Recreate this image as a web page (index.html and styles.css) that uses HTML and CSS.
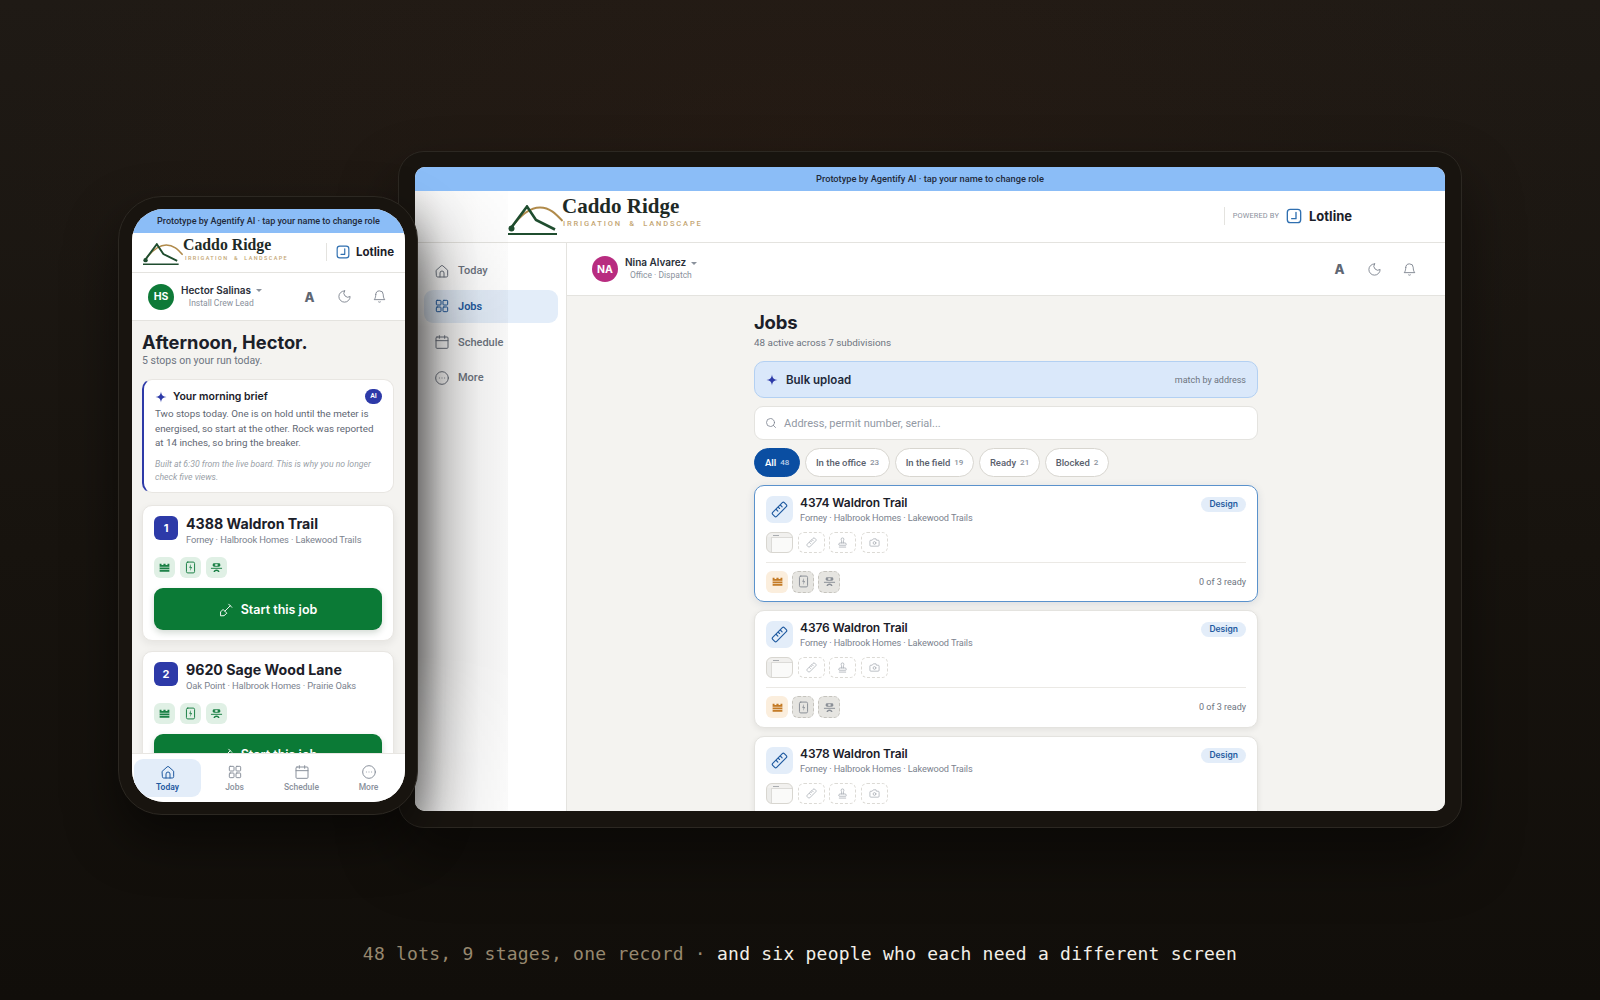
FILE: index.html
```html
<!DOCTYPE html>
<html lang="en">

<head>
   <meta charset="UTF-8">
   <meta name="viewport" content="width=device-width, initial-scale=1.0">
   <title>Caddo Ridge on Lotline</title>
   <link rel="stylesheet" href="styles.css">
</head>

<body>
   <svg class="icon-defs" width="0" height="0" aria-hidden="true">
      <symbol id="i-home" viewBox="0 0 24 24"><path d="M3.5 10.8 10.6 4.4a2 2 0 0 1 2.8 0l7.1 6.4V19a2 2 0 0 1-2 2H5.5a2 2 0 0 1-2-2z" /><path d="M9 21v-6a3 3 0 0 1 6 0v6" /></symbol>
      <symbol id="i-grid" viewBox="0 0 24 24"><rect x="3.5" y="3.5" width="7" height="7" rx="1.2" /><rect x="13.5" y="3.5" width="7" height="7" rx="1.2" /><rect x="3.5" y="13.5" width="7" height="7" rx="1.2" /><rect x="13.5" y="13.5" width="7" height="7" rx="1.2" /></symbol>
      <symbol id="i-cal" viewBox="0 0 24 24"><rect x="3" y="4.5" width="18" height="17" rx="1.5" /><path d="M3 10h18M8 2.5v4M16 2.5v4" /></symbol>
      <symbol id="i-more" viewBox="0 0 24 24"><circle cx="12" cy="12" r="9.5" /><path d="M8 12h.01M12 12h.01M16 12h.01" /></symbol>
      <symbol id="i-moon" viewBox="0 0 24 24"><path d="M12 3a6.5 6.5 0 0 0 9 9 9 9 0 1 1-9-9Z" /></symbol>
      <symbol id="i-bell" viewBox="0 0 24 24"><path d="M6 9a6 6 0 0 1 12 0c0 6 2.500 8 2.500 8h-17S6 15 6 9" /><path d="M10.300 20.500a2 2 0 0 0 3.400 0" /></symbol>
      <symbol id="i-ruler" viewBox="0 0 24 24"><path d="M16 2.400a2 2 0 0 1 2.800 0l2.800 2.800a2 2 0 0 1 0 2.800L8 21.600a2 2 0 0 1-2.800 0l-2.800-2.800a2 2 0 0 1 0-2.800Z" /><path d="m13.500 6 2.200 2.200M10.500 9l1.600 1.600M7.500 12l2.200 2.200" /></symbol>
      <symbol id="i-stamp" viewBox="0 0 24 24"><path d="M5 22h14" /><path d="M4 15.500A2.500 2.500 0 0 1 6.500 13h11a2.500 2.500 0 0 1 2.500 2.500V17a1 1 0 0 1-1 1H5a1 1 0 0 1-1-1Z" /><path d="M14 13V8.500C14 7 15 7 15 5a3 3 0 0 0-6 0c0 2 1 2 1 3.500V13" /></symbol>
      <symbol id="i-camera" viewBox="0 0 24 24"><path d="M14.500 4h-5L7 7H4a2 2 0 0 0-2 2v9a2 2 0 0 0 2 2h16a2 2 0 0 0 2-2V9a2 2 0 0 0-2-2h-3z" /><circle cx="12" cy="13" r="3" /></symbol>
      <symbol id="i-shovel" viewBox="0 0 24 24"><path d="M2.500 21.500v-5.600l4-4 6 6-4 3.600z" /><path d="M9.500 14.500 18 6" /><path d="m15.500 3.500 5 5" /></symbol>
      <symbol id="i-fence" viewBox="0 0 24 24"><path class="solid" d="M3 5h3.500v2.500h3.500V5h4v2.500h3.500V5H21v15H3z" /><path class="cut" d="M3 11.500h18M3 15.800h18" /></symbol>
      <symbol id="i-meter" viewBox="0 0 24 24"><rect x="4.500" y="2" width="15" height="20" rx="2.500" /><path class="bolt" d="m13 5.500-3.500 7h2.800l-1.200 6 3.800-7.300H12.300z" /></symbol>
      <symbol id="i-crew" viewBox="0 0 24 24"><rect class="solid" x="5" y="4" width="14" height="6.500" rx="2.500" /><rect class="cut" x="10.500" y="6.300" width="3" height="2" /><path d="M2.500 13.500h19" /><path class="solid" d="M6.500 20.500c0-3 2.500-4.800 5.500-4.800s5.500 1.800 5.500 4.800h-2.500c-.5-1.300-1.500-2-3-2s-2.500.7-3 2z" /></symbol>
      <symbol id="i-search" viewBox="0 0 24 24"><circle cx="11" cy="11" r="8" /><path d="m21 21-4.300-4.300" /></symbol>
      <symbol id="i-spark" viewBox="0 0 24 24"><path class="spark" d="M12 1c.9 7 3.800 10.100 11 11-7.200.9-10.100 4-11 11-.9-7-3.800-10.100-11-11 7.200-.9 10.100-4 11-11Z" /></symbol>
      <symbol id="i-lotline" viewBox="0 0 24 24"><rect x="2" y="2" width="20" height="20" rx="4.500" /><path d="M15 6.500v9.500H8.500" /></symbol>
      <symbol id="i-mountain" viewBox="0 0 55 30"><path class="ridge" d="M3 23C11 12 21 2.500 32 2.500c10 0 16 6.500 22.500 13.500" /><path class="peak" d="M3 23 19 1.500 28 15l19 9.500" /><circle class="peak-dot" cx="3.500" cy="23.500" r="3" /><path class="peak-base" d="M0 29h49" /></symbol>
   </svg>

   <main class="stage">
      <section class="tablet">
         <div class="tablet-screen">
            <div class="proto-bar">Prototype by Agentify AI · tap your name to change role</div>
            <header class="brand-bar">
               <div class="brand">
                  <svg class="brand-mark"><use href="#i-mountain" /></svg>
                  <div class="brand-words">
                     <div class="brand-name">Caddo Ridge</div>
                     <div class="brand-tag">IRRIGATION &nbsp;&amp;&nbsp; LANDSCAPE</div>
                  </div>
               </div>
               <div class="powered">
                  <span class="powered-by">POWERED BY</span>
                  <svg class="ico lotline-mark"><use href="#i-lotline" /></svg>
                  <span class="lotline-name">Lotline</span>
               </div>
            </header>
            <div class="tablet-body">
               <nav class="side-nav">
                  <a class="side-item"><svg class="ico"><use href="#i-home" /></svg>Today</a>
                  <a class="side-item active"><svg class="ico"><use href="#i-grid" /></svg>Jobs</a>
                  <a class="side-item"><svg class="ico"><use href="#i-cal" /></svg>Schedule</a>
                  <a class="side-item"><svg class="ico"><use href="#i-more" /></svg>More</a>
               </nav>
               <div class="tablet-main">
                  <div class="profile-bar">
                     <div class="avatar avatar-pink">NA</div>
                     <div class="who">
                        <div class="who-name">Nina Alvarez <span class="caret"></span></div>
                        <div class="who-role">Office · Dispatch</div>
                     </div>
                     <div class="bar-tools">
                        <span class="tool-a">A</span>
                        <svg class="ico"><use href="#i-moon" /></svg>
                        <svg class="ico"><use href="#i-bell" /></svg>
                     </div>
                  </div>
                  <div class="jobs-wrap">
                     <div class="jobs">
                        <h1 class="jobs-title">Jobs</h1>
                        <p class="jobs-sub">48 active across 7 subdivisions</p>

                        <div class="bulk">
                           <svg class="ico spark-ico"><use href="#i-spark" /></svg>
                           <span class="bulk-label">Bulk upload</span>
                           <span class="bulk-hint">match by address</span>
                        </div>

                        <div class="search">
                           <svg class="ico"><use href="#i-search" /></svg>
                           Address, permit number, serial...
                        </div>

                        <div class="chips">
                           <span class="chip on">All <b>48</b></span>
                           <span class="chip">In the office <b>23</b></span>
                           <span class="chip">In the field <b>19</b></span>
                           <span class="chip">Ready <b>21</b></span>
                           <span class="chip">Blocked <b>2</b></span>
                        </div>

                        <article class="job selected">
                           <div class="job-top">
                              <div class="job-ico"><svg class="ico"><use href="#i-ruler" /></svg></div>
                              <div class="job-words">
                                 <div class="job-title">4374 Waldron Trail</div>
                                 <div class="job-sub">Forney · Halbrook Homes · Lakewood Trails</div>
                              </div>
                              <span class="badge">Design</span>
                           </div>
                           <div class="docs">
                              <div class="doc-thumb"></div>
                              <div class="doc"><svg class="ico"><use href="#i-ruler" /></svg></div>
                              <div class="doc"><svg class="ico"><use href="#i-stamp" /></svg></div>
                              <div class="doc"><svg class="ico"><use href="#i-camera" /></svg></div>
                           </div>
                           <div class="job-foot">
                              <div class="trade orange"><svg class="ico"><use href="#i-fence" /></svg></div>
                              <div class="trade grey"><svg class="ico"><use href="#i-meter" /></svg></div>
                              <div class="trade grey"><svg class="ico"><use href="#i-crew" /></svg></div>
                              <span class="ready">0 of 3 ready</span>
                           </div>
                        </article>

                        <article class="job">
                           <div class="job-top">
                              <div class="job-ico"><svg class="ico"><use href="#i-ruler" /></svg></div>
                              <div class="job-words">
                                 <div class="job-title">4376 Waldron Trail</div>
                                 <div class="job-sub">Forney · Halbrook Homes · Lakewood Trails</div>
                              </div>
                              <span class="badge">Design</span>
                           </div>
                           <div class="docs">
                              <div class="doc-thumb"></div>
                              <div class="doc"><svg class="ico"><use href="#i-ruler" /></svg></div>
                              <div class="doc"><svg class="ico"><use href="#i-stamp" /></svg></div>
                              <div class="doc"><svg class="ico"><use href="#i-camera" /></svg></div>
                           </div>
                           <div class="job-foot">
                              <div class="trade orange"><svg class="ico"><use href="#i-fence" /></svg></div>
                              <div class="trade grey"><svg class="ico"><use href="#i-meter" /></svg></div>
                              <div class="trade grey"><svg class="ico"><use href="#i-crew" /></svg></div>
                              <span class="ready">0 of 3 ready</span>
                           </div>
                        </article>

                        <article class="job">
                           <div class="job-top">
                              <div class="job-ico"><svg class="ico"><use href="#i-ruler" /></svg></div>
                              <div class="job-words">
                                 <div class="job-title">4378 Waldron Trail</div>
                                 <div class="job-sub">Forney · Halbrook Homes · Lakewood Trails</div>
                              </div>
                              <span class="badge">Design</span>
                           </div>
                           <div class="docs">
                              <div class="doc-thumb"></div>
                              <div class="doc"><svg class="ico"><use href="#i-ruler" /></svg></div>
                              <div class="doc"><svg class="ico"><use href="#i-stamp" /></svg></div>
                              <div class="doc"><svg class="ico"><use href="#i-camera" /></svg></div>
                           </div>
                        </article>
                     </div>
                  </div>
               </div>
            </div>
            <div class="phone-shadow"></div>
         </div>
      </section>

      <section class="phone">
         <div class="phone-screen">
            <div class="proto-bar">Prototype by Agentify AI · tap your name to change role</div>
            <header class="brand-bar">
               <div class="brand">
                  <svg class="brand-mark"><use href="#i-mountain" /></svg>
                  <div class="brand-words">
                     <div class="brand-name">Caddo Ridge</div>
                     <div class="brand-tag">IRRIGATION &nbsp;&amp;&nbsp; LANDSCAPE</div>
                  </div>
               </div>
               <div class="powered">
                  <svg class="ico lotline-mark"><use href="#i-lotline" /></svg>
                  <span class="lotline-name">Lotline</span>
               </div>
            </header>
            <div class="profile-bar">
               <div class="avatar avatar-green">HS</div>
               <div class="who">
                  <div class="who-name">Hector Salinas <span class="caret"></span></div>
                  <div class="who-role">Install Crew Lead</div>
               </div>
               <div class="bar-tools">
                  <span class="tool-a">A</span>
                  <svg class="ico"><use href="#i-moon" /></svg>
                  <svg class="ico"><use href="#i-bell" /></svg>
               </div>
            </div>

            <div class="today">
               <h1 class="hello">Afternoon, Hector.</h1>
               <p class="hello-sub">5 stops on your run today.</p>

               <div class="brief">
                  <div class="brief-head">
                     <svg class="ico spark-ico"><use href="#i-spark" /></svg>
                     <span class="brief-title">Your morning brief</span>
                     <span class="ai-pill">AI</span>
                  </div>
                  <p class="brief-text">Two stops today. One is on hold until the meter is energised, so start at the other. Rock was reported at 14 inches, so bring the breaker.</p>
                  <p class="brief-note">Built at 6:30 from the live board. This is why you no longer check five views.</p>
               </div>

               <article class="stop">
                  <div class="stop-top">
                     <div class="stop-num">1</div>
                     <div>
                        <div class="stop-title">4388 Waldron Trail</div>
                        <div class="stop-sub">Forney · Halbrook Homes · Lakewood Trails</div>
                     </div>
                  </div>
                  <div class="stop-trades">
                     <div class="trade green"><svg class="ico"><use href="#i-fence" /></svg></div>
                     <div class="trade green"><svg class="ico"><use href="#i-meter" /></svg></div>
                     <div class="trade green"><svg class="ico"><use href="#i-crew" /></svg></div>
                  </div>
                  <button class="start"><svg class="ico"><use href="#i-shovel" /></svg>Start this job</button>
               </article>

               <article class="stop">
                  <div class="stop-top">
                     <div class="stop-num">2</div>
                     <div>
                        <div class="stop-title">9620 Sage Wood Lane</div>
                        <div class="stop-sub">Oak Point · Halbrook Homes · Prairie Oaks</div>
                     </div>
                  </div>
                  <div class="stop-trades">
                     <div class="trade green"><svg class="ico"><use href="#i-fence" /></svg></div>
                     <div class="trade green"><svg class="ico"><use href="#i-meter" /></svg></div>
                     <div class="trade green"><svg class="ico"><use href="#i-crew" /></svg></div>
                  </div>
                  <button class="start"><svg class="ico"><use href="#i-shovel" /></svg>Start this job</button>
               </article>
            </div>

            <nav class="tab-bar">
               <a class="tab active"><svg class="ico"><use href="#i-home" /></svg>Today</a>
               <a class="tab"><svg class="ico"><use href="#i-grid" /></svg>Jobs</a>
               <a class="tab"><svg class="ico"><use href="#i-cal" /></svg>Schedule</a>
               <a class="tab"><svg class="ico"><use href="#i-more" /></svg>More</a>
            </nav>
         </div>
      </section>

      <p class="caption"><span class="caption-dim">48 lots, 9 stages, one record · </span>and six people who each need a different screen</p>
   </main>
</body>

</html>
```

FILE: styles.css
```css
* {
   box-sizing: border-box;
}

html,
body {
   margin: 0;
   height: 100%;
}

body {
   background: #15110d;
   font-family: "Roboto", "Noto Sans", sans-serif;
   color: #1b2029;
   overflow: hidden;
}

.icon-defs {
   position: absolute;
}

.ico {
   display: block;
   width: 16px;
   height: 16px;
   fill: none;
   stroke: currentColor;
   stroke-width: 1.6;
   stroke-linecap: round;
   stroke-linejoin: round;
   flex: none;
}

.solid {
   fill: currentColor;
   stroke: none;
}

.cut {
   stroke: var(--tile, #fff);
   stroke-width: 1.3;
   fill: var(--tile, #fff);
}

.bolt {
   fill: currentColor;
   stroke: none;
}

.spark {
   fill: #2d3aa8;
   stroke: none;
}

.peak {
   fill: none;
   stroke: #1f4d2f;
   stroke-width: 2.6;
}

.peak-base {
   fill: none;
   stroke: #1f4d2f;
   stroke-width: 2;
}

.peak-dot {
   fill: #1f4d2f;
   stroke: none;
}

.ridge {
   fill: none;
   stroke: #b08a4a;
   stroke-width: 2;
}

.stage {
   position: relative;
   width: 1600px;
   height: 1000px;
   background:
      radial-gradient(ellipse 800px 420px at 50% 14%, rgba(60, 32, 18, 0.22), transparent),
      linear-gradient(#1f1a15, #17130e 55%, #110e0a);
}

/* devices sit on a free canvas */
.tablet {
   position: absolute;
   left: 398px;
   top: 151px;
   width: 1064px;
   height: 677px;
   padding: 15px 16px 16px;
   background: #18140f;
   border: 1px solid #2c2822;
   border-radius: 26px;
   box-shadow: 0 30px 60px rgba(0, 0, 0, 0.45);
}

.tablet-screen {
   position: relative;
   width: 100%;
   height: 100%;
   display: flex;
   flex-direction: column;
   overflow: hidden;
   border-radius: 10px;
   background: #fff;
}

.phone {
   position: absolute;
   left: 118px;
   top: 196px;
   width: 300px;
   height: 619px;
   padding: 12px 12px 12px 13px;
   background: #18140f;
   border: 1px solid #2c2822;
   border-radius: 44px;
   box-shadow: 0 24px 50px rgba(0, 0, 0, 0.5);
}

.phone-screen {
   position: relative;
   width: 100%;
   height: 100%;
   display: flex;
   flex-direction: column;
   overflow: hidden;
   border-radius: 32px;
   background: #f4f3f0;
}

/* the phone's shadow falling on the tablet */
.phone-shadow {
   position: absolute;
   left: 0;
   top: 24px;
   width: 93px;
   bottom: 0;
   pointer-events: none;
   background: linear-gradient(to right, rgba(20, 16, 12, 0.42), rgba(20, 16, 12, 0.2) 30%, rgba(20, 16, 12, 0.07) 70%, rgba(20, 16, 12, 0.035));
   -webkit-mask-image: linear-gradient(to bottom, rgba(0, 0, 0, 0.2), #000 22%, #000 75%, rgba(0, 0, 0, 0.6));
   mask-image: linear-gradient(to bottom, rgba(0, 0, 0, 0.2), #000 22%, #000 75%, rgba(0, 0, 0, 0.6));
}

.proto-bar {
   flex: none;
   height: 24px;
   background: #8bbdf7;
   color: #1f2a3a;
   font-size: 9.250px;
   font-weight: 500;
   text-align: center;
   line-height: 24px;
   white-space: nowrap;
}

.phone .proto-bar {
   font-size: 9.050px;
}

.brand-bar {
   flex: none;
   display: flex;
   align-items: center;
   background: #fff;
   border-bottom: 1px solid #e4e3df;
}

.brand {
   display: flex;
   align-items: flex-start;
}

.brand-name {
   font-family: "Liberation Serif", serif;
   font-weight: 700;
   color: #1e2a26;
   white-space: nowrap;
}

.brand-tag {
   color: #c4a673;
   white-space: nowrap;
   font-weight: 500;
}

.brand-mark {
   display: block;
   flex: none;
}

.powered {
   margin-left: auto;
   display: flex;
   align-items: center;
   border-left: 1px solid #e4e3df;
}

.powered-by {
   font-size: 7.400px;
   color: #8a919c;
   letter-spacing: 0.02em;
}

.lotline-mark {
   color: #2f6fb0;
   stroke-width: 2;
}

.lotline-name {
   font-family: "Inter", sans-serif;
   font-weight: 700;
   color: #1b2029;
}

.tablet .brand-bar {
   height: 52px;
   padding: 0 93px 0 93px;
}

.tablet .brand {
   height: 43px;
}

.tablet .brand-mark {
   width: 55px;
   height: 30px;
   margin-top: 10px;
   margin-right: -1px;
}

.tablet .brand-name {
   font-size: 21px;
   line-height: 24px;
   margin-top: -1px;
}

.tablet .brand-tag {
   font-size: 7.500px;
   line-height: 10px;
   letter-spacing: 0.245em;
   margin: 1px 0 0 1px;
}

.tablet .powered {
   height: 18px;
   padding-left: 8px;
   gap: 7px;
   margin-top: -2px;
}

.tablet .lotline-mark {
   width: 16px;
   height: 16px;
}

.tablet .lotline-name {
   font-size: 13px;
}

.phone .brand-bar {
   height: 40px;
   padding: 0 11px 0 11px;
}

.phone .brand {
   height: 33px;
}

.phone .brand-mark {
   width: 40px;
   height: 22px;
   margin-top: 7px;
}

.phone .brand-name {
   font-size: 15.800px;
   line-height: 18px;
}

.phone .brand-tag {
   font-size: 5.500px;
   line-height: 8px;
   letter-spacing: 0.25em;
   margin-left: 2px;
}

.phone .powered {
   height: 18px;
   padding-left: 9px;
   gap: 6px;
   margin-top: -2px;
}

.phone .lotline-mark {
   width: 14px;
   height: 14px;
}

.phone .lotline-name {
   font-size: 11.500px;
}

.tablet-body {
   flex: 1;
   min-height: 0;
   display: flex;
}

.side-nav {
   flex: none;
   width: 152px;
   padding: 11px 8px 0 9px;
   background: #fff;
   border-right: 1px solid #e4e3df;
   display: flex;
   flex-direction: column;
   gap: 2.200px;
}

.side-item {
   display: flex;
   align-items: center;
   gap: 8px;
   height: 33.500px;
   padding: 0 10px;
   border-radius: 9px;
   font-size: 11px;
   font-weight: 500;
   color: #6d7480;
}

.side-item .ico {
   width: 16px;
   height: 16px;
   stroke-width: 1.500;
}

.side-item.active {
   background: #e3edf9;
   color: #1f5aa0;
   font-weight: 600;
}

.tablet-main {
   flex: 1;
   min-width: 0;
   display: flex;
   flex-direction: column;
   background: #f4f3f0;
}

.profile-bar {
   flex: none;
   display: flex;
   align-items: center;
   background: #fff;
   border-bottom: 1px solid #e4e3df;
}

.tablet-main .profile-bar {
   height: 53px;
   padding: 0 28px 0 25px;
}

.phone .profile-bar {
   height: 48px;
   padding: 0 18px 0 16px;
}

.avatar {
   flex: none;
   width: 26px;
   height: 26px;
   border-radius: 50%;
   color: #fff;
   font-family: "Inter", sans-serif;
   font-size: 10.500px;
   font-weight: 700;
   display: flex;
   align-items: center;
   justify-content: center;
}

.avatar-pink {
   background: #b82c80;
}

.avatar-green {
   background: #0e7a38;
}

.who {
   margin: -1px 0 0 7px;
   text-align: center;
}

.who-name {
   font-family: "Inter", sans-serif;
   font-size: 10px;
   font-weight: 600;
   line-height: 13px;
   color: #2a2f39;
   white-space: nowrap;
}

.who-role {
   margin-top: 1px;
   font-size: 8.500px;
   line-height: 11px;
   color: #8a919c;
   white-space: nowrap;
}

.caret {
   display: inline-block;
   vertical-align: middle;
   margin-left: 2px;
   border-left: 3px solid transparent;
   border-right: 3px solid transparent;
   border-top: 3px solid #8a919c;
}

.bar-tools {
   margin-left: auto;
   display: flex;
   align-items: center;
   gap: 20px;
   color: #6d7480;
}

.bar-tools .ico {
   width: 15px;
   height: 15px;
   stroke-width: 1.300;
}

.tool-a {
   width: 15px;
   text-align: center;
   font-family: "Inter", sans-serif;
   font-size: 13px;
   font-weight: 800;
   color: #5f6773;
}

.jobs-wrap {
   flex: 1;
   min-height: 0;
   overflow: hidden;
   padding: 14px 0 0 187px;
}

.jobs {
   width: 504px;
}

.jobs-title {
   margin: 0;
   font-family: "Inter", sans-serif;
   font-size: 18.500px;
   line-height: 24px;
   font-weight: 700;
   letter-spacing: -0.2px;
   color: #1b2029;
}

.jobs-sub {
   margin: 2px 0 0;
   font-size: 9.900px;
   line-height: 14px;
   color: #6d7480;
}

.bulk {
   margin-top: 11px;
   height: 37px;
   padding: 0 11px;
   display: flex;
   align-items: center;
   background: #dae8fa;
   border: 1px solid #b3d0f2;
   border-radius: 10px;
}

.spark-ico {
   width: 12px;
   height: 12px;
}

.bulk-label {
   margin-left: 8px;
   font-family: "Inter", sans-serif;
   font-size: 11.500px;
   font-weight: 600;
   color: #1f2a3a;
}

.bulk-hint {
   margin-left: auto;
   font-size: 9px;
   color: #6d7480;
}

.search {
   margin-top: 8px;
   height: 34px;
   padding: 0 10px;
   display: flex;
   align-items: center;
   gap: 7px;
   background: #fff;
   border: 1px solid #e4e3df;
   border-radius: 9px;
   font-size: 11px;
   color: #9299a4;
}

.search .ico {
   width: 12px;
   height: 12px;
   stroke-width: 1.600;
   color: #7b828e;
}

.chips {
   margin-top: 8px;
   display: flex;
   gap: 4.500px;
}

.chip {
   height: 29px;
   padding: 0 10px;
   display: flex;
   align-items: center;
   gap: 4px;
   background: #fff;
   border: 1px solid #d8d6d0;
   border-radius: 15px;
   font-size: 9.500px;
   font-weight: 500;
   color: #5a616d;
   white-space: nowrap;
}

.chip b {
   font-size: 8px;
   font-weight: 500;
   color: #8a919c;
}

.chip.on {
   background: #0a4ea2;
   border-color: #0a4ea2;
   color: #fff;
   font-weight: 600;
}

.chip.on b {
   color: #b9cfe9;
}

.job {
   margin-top: 8px;
   padding: 10px 11px 0;
   height: 117.500px;
   background: #fff;
   border: 1px solid #e4e3df;
   border-radius: 10px;
   box-shadow: 0 2px 6px rgba(30, 30, 30, 0.08);
}

.chips + .job {
   margin-top: 7.500px;
}

.job.selected {
   border-color: #5a92cc;
   box-shadow: 0 2px 8px rgba(30, 60, 100, 0.12);
}

.job-top {
   display: flex;
   align-items: flex-start;
}

.job-ico {
   flex: none;
   width: 27px;
   height: 27px;
   border-radius: 7px;
   background: #e3edf9;
   color: #1f5aa0;
   display: flex;
   align-items: center;
   justify-content: center;
}

.job-ico .ico {
   width: 17px;
   height: 17px;
}

.job-words {
   margin-left: 7px;
}

.job-title {
   font-family: "Inter", sans-serif;
   font-size: 12px;
   line-height: 14px;
   font-weight: 600;
   letter-spacing: -0.1px;
   color: #1b2029;
}

.job-sub {
   margin-top: 1px;
   font-size: 9.200px;
   letter-spacing: -0.1px;
   line-height: 13px;
   color: #7b828e;
}

.badge {
   margin-left: auto;
   margin-top: 1px;
   height: 15px;
   padding: 0 8px;
   border-radius: 8px;
   background: #e3edf9;
   color: #1f5aa0;
   font-family: "Inter", sans-serif;
   font-size: 8.500px;
   line-height: 15px;
   font-weight: 600;
}

.docs {
   margin-top: 8px;
   display: flex;
   gap: 4.500px;
   padding-bottom: 9px;
   border-bottom: 1px solid #ebe9e5;
}

.doc,
.doc-thumb {
   width: 27px;
   height: 21px;
   border-radius: 6px;
}

.doc {
   border: 1px dashed #dcdad5;
   color: #a3a8b0;
   display: flex;
   align-items: center;
   justify-content: center;
}

.doc .ico {
   width: 11px;
   height: 11px;
}

.doc-thumb {
   border: 1px solid #d8d6d0;
   background:
      linear-gradient(#a9acb0, #a9acb0) 6px 2px / 6px 1px no-repeat,
      linear-gradient(#dcdbd8, #dcdbd8) 5px 4px / 100% 1px no-repeat,
      linear-gradient(#f1f0ee, #f1f0ee) 0 0 / 100% 4px no-repeat,
      linear-gradient(#dcdbd8, #dcdbd8) 4px 0 / 1px 100% no-repeat,
      linear-gradient(#ececea, #ececea) 0 0 / 4px 100% no-repeat,
      #fafaf9;
}

.job-foot {
   margin-top: 8px;
   display: flex;
   align-items: center;
   gap: 4px;
}

.trade {
   width: 22px;
   height: 22px;
   border-radius: 6px;
   display: flex;
   align-items: center;
   justify-content: center;
}

.trade .ico {
   width: 13px;
   height: 13px;
   stroke-width: 1.800;
}

.trade.orange {
   --tile: #fbeedd;
   background: #fbeedd;
   color: #c47a24;
}

.trade.grey {
   --tile: #e6e5e1;
   background: #e6e5e1;
   border: 1px dashed #c5c3bd;
   color: #8a8f96;
}

.trade.green {
   --tile: #e0f0e5;
   background: #e0f0e5;
   color: #1a8045;
}

.ready {
   margin-left: auto;
   font-size: 9px;
   color: #6d7480;
}

/* phone content */
.today {
   flex: 1;
   min-height: 0;
   overflow: hidden;
   padding: 10px 11px 0 10px;
   background: #f4f3f0;
}

.hello {
   margin: 0;
   font-family: "Inter", sans-serif;
   font-size: 18.300px;
   line-height: 22px;
   font-weight: 700;
   color: #1b2029;
}

.hello-sub {
   margin: 1px 0 0;
   font-size: 10.500px;
   line-height: 14px;
   color: #6d7480;
}

.brief {
   margin-top: 11px;
   height: 114px;
   padding: 9px 11px 0 11px;
   background: #fff;
   border: 1px solid #e8e6e2;
   border-left: 2px solid #2d3aa8;
   border-radius: 10px;
}

.brief-head {
   display: flex;
   align-items: center;
}

.brief-title {
   margin-left: 6px;
   font-family: "Inter", sans-serif;
   font-size: 10.500px;
   font-weight: 600;
   color: #1b2029;
}

.ai-pill {
   margin-left: auto;
   width: 17px;
   height: 15px;
   border-radius: 8px;
   background: #2d3aa8;
   color: #fff;
   font-size: 7px;
   font-weight: 600;
   line-height: 15px;
   text-align: center;
}

.brief-text {
   margin: 3px 0 0;
   font-size: 9.800px;
   line-height: 14.700px;
   color: #5f6773;
}

.brief-note {
   margin: 7px 0 0;
   font-size: 8.700px;
   line-height: 12.500px;
   font-style: italic;
   color: #9a9fa8;
}

.stop {
   margin-top: 12px;
   height: 136px;
   padding: 10px 11px 0;
   background: #fff;
   border: 1px solid #e8e6e2;
   border-radius: 10px;
   box-shadow: 0 3px 8px rgba(30, 30, 30, 0.07);
}

.stop + .stop {
   margin-top: 9.500px;
}

.stop-top {
   display: flex;
   gap: 8px;
}

.stop-num {
   flex: none;
   width: 24px;
   height: 24px;
   border-radius: 6px;
   background: #2d3aa8;
   color: #fff;
   font-family: "Inter", sans-serif;
   font-size: 11px;
   font-weight: 700;
   line-height: 24px;
   text-align: center;
}

.stop-title {
   font-family: "Inter", sans-serif;
   font-size: 14.200px;
   line-height: 16px;
   font-weight: 700;
   color: #1b2029;
   white-space: nowrap;
}

.stop-sub {
   margin-top: 1px;
   font-size: 9.400px;
   letter-spacing: -0.12px;
   line-height: 13px;
   color: #7b828e;
   white-space: nowrap;
}

.stop-trades {
   margin-top: 11px;
   display: flex;
   gap: 5px;
}

.stop-trades .trade {
   width: 21px;
   height: 21px;
}

.start {
   display: flex;
   align-items: center;
   justify-content: center;
   gap: 7px;
   width: 100%;
   height: 42px;
   margin-top: 10px;
   border: 0;
   border-radius: 9px;
   background: #0b7a36;
   color: #fff;
   font: 600 12.500px "Inter", sans-serif;
   box-shadow: 0 3px 6px rgba(20, 60, 30, 0.18);
}

.start .ico {
   width: 15px;
   height: 15px;
   stroke-width: 1.500;
}

.tab-bar {
   flex: none;
   height: 49px;
   padding: 5px 3px 5px 2px;
   display: flex;
   background: #fff;
   border-top: 1px solid #e8e6e2;
}

.tab {
   flex: 1;
   display: flex;
   flex-direction: column;
   align-items: center;
   justify-content: center;
   gap: 2px;
   border-radius: 9px;
   font-size: 8.500px;
   font-weight: 500;
   color: #8a919c;
}

.tab .ico {
   width: 16px;
   height: 16px;
   stroke-width: 1.500;
}

.tab.active {
   background: #e3edf9;
   color: #1f5aa0;
   font-weight: 600;
}

.caption {
   position: absolute;
   left: 0;
   right: 0;
   top: 942px;
   margin: 0;
   text-align: center;
   font-family: "DejaVu Sans Mono", monospace;
   font-size: 18px;
   letter-spacing: 0.23px;
   line-height: 24px;
   color: #f3efe8;
}

.caption-dim {
   color: #97886f;
}
```
